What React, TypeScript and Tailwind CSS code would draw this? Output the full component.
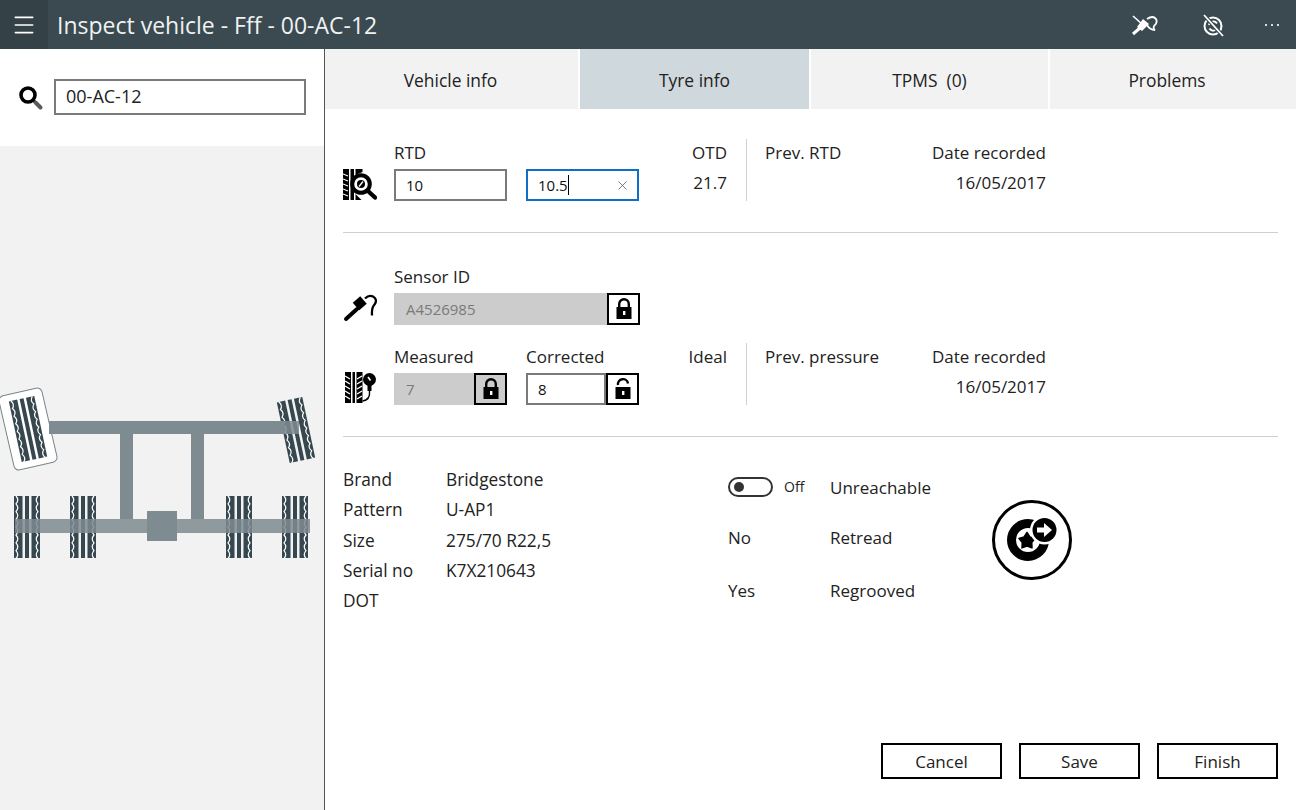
import React from 'react';
import { Menu, X } from 'lucide-react';

const Tyre = ({ x, y, rotate = 0 }: { x: number; y: number; rotate?: number }) => {
  const wave = (cx: number, dir: number) => {
    let d = `M${cx} -31`;
    for (let i = 0; i < 8; i++) d += ` q${dir * 3.5} 3.9 0 7.8`;
    return d;
  };
  return (
    <g transform={`translate(${x} ${y}) rotate(${rotate})`}>
      <g fill="#37474f">
        <rect x="-13" y="-31" width="8.5" height="62" />
        <rect x="-2" y="-31" width="4" height="62" />
        <rect x="4.5" y="-31" width="8.5" height="62" />
      </g>
      <path d={wave(-11, 1)} fill="none" stroke="#fff" strokeWidth="1.2" />
      <path d={wave(11, -1)} fill="none" stroke="#fff" strokeWidth="1.2" />
    </g>
  );
};

const AxleDiagram = () => (
  <svg width="324" height="190" viewBox="0 380 324 190" className="block">
    <g transform="rotate(-13 28 429)">
      <rect x="6" y="391" width="44" height="76" rx="5" fill="#fff" stroke="#78868c" strokeWidth="1" />
    </g>
    <Tyre x={28} y={429} rotate={-12} />
    <Tyre x={296} y={430} rotate={-12} />
    <Tyre x={27} y={527} />
    <Tyre x={83} y={527} />
    <Tyre x={239} y={527} />
    <Tyre x={295} y={527} />
    <g fill="#7e8b91" fillOpacity="0.85">
      <rect x="285" y="421" width="14" height="13" />
      <rect x="15" y="519" width="295" height="14" />
    </g>
    <g fill="#7e8b91">
      <rect x="49" y="421" width="236" height="13" />
      <rect x="120" y="434" width="13" height="85" />
      <rect x="191" y="434" width="13" height="85" />
      <rect x="147" y="511" width="30" height="30" />
    </g>
  </svg>
);

const SearchGlyph = () => (
  <svg width="26" height="26" viewBox="0 0 26 26">
    <circle cx="10" cy="10" r="7" fill="none" stroke="#000" strokeWidth="3.6" />
    <path d="M15 15l2.5 2.5" stroke="#000" strokeWidth="3" />
    <path d="M17.5 17.5l5 5" stroke="#5a5a5a" strokeWidth="4" strokeLinecap="round" />
  </svg>
);

const SensorIcon = () => (
  <svg width="34" height="34" viewBox="0 0 34 34">
    <path d="M3 28l11-10" stroke="#000" strokeWidth="4" strokeLinecap="round" />
    <path d="M13 15.5l7.5-6.5" stroke="#000" strokeWidth="10" />
    <path d="M22 7.5q4-4 8-2 5 3 1.5 8-3 3-2.5 11" fill="none" stroke="#000" strokeWidth="2.3" />
  </svg>
);

const RtdIcon = () => (
  <svg width="34" height="34" viewBox="0 0 34 34">
    <rect x="0" y="1" width="6" height="31" fill="#000" />
    <path d="M0 6l5 2M0 11l5 2M0 16l5 2M0 21l5 2M0 26l5 2" stroke="#fff" strokeWidth="1.1" />
    <rect x="7.5" y="1" width="3.5" height="31" fill="#000" />
    <path d="M12.5 1h7v3l-7 3zM12.5 32v-6l6 6z" fill="#000" />
    <circle cx="18" cy="16" r="8.8" fill="#fff" stroke="#000" strokeWidth="4" />
    <circle cx="18" cy="16" r="4" fill="#000" />
    <path d="M16 18.5l4-5" stroke="#fff" strokeWidth="1.3" />
    <path d="M25 23l7 6.5" stroke="#000" strokeWidth="4.4" strokeLinecap="round" />
  </svg>
);

const PressureIcon = () => (
  <svg width="34" height="34" viewBox="0 0 34 34">
    <g fill="#000">
      <rect x="2" y="1" width="6" height="31" />
      <rect x="9.5" y="1" width="2.5" height="31" />
      <rect x="13.5" y="1" width="6" height="31" />
    </g>
    <path d="M2 5l5 3M2 10l5 3M2 15l5 3M2 20l5 3M2 25l5 3" stroke="#fff" strokeWidth="1.4" />
    <path d="M19 5l-5 3M19 10l-5 3M19 15l-5 3M19 20l-5 3M19 25l-5 3" stroke="#fff" strokeWidth="1.4" />
    <circle cx="26.5" cy="8.5" r="6.5" fill="#000" />
    <path d="M25 6l2.5 3.5" stroke="#fff" strokeWidth="1.6" />
    <path d="M26.5 14v6" stroke="#000" strokeWidth="4" />
    <path d="M26.5 20q1 9-7 10" fill="none" stroke="#000" strokeWidth="1.4" />
  </svg>
);

const LockGlyph = ({ open = false }: { open?: boolean }) => (
  <svg width="20" height="24" viewBox="0 0 20 24">
    <rect x="2.5" y="10" width="15" height="12" fill="#000" />
    <rect x="9" y="14" width="2.4" height="4" fill="#fff" />
    {open ? (
      <path d="M5 8a5 5 0 0 1 10-1.5" fill="none" stroke="#000" strokeWidth="2.4" />
    ) : (
      <path d="M5.2 10V7a4.8 4.8 0 0 1 9.6 0v3" fill="none" stroke="#000" strokeWidth="2.4" />
    )}
  </svg>
);

const LockButton = ({ open, filled }: { open?: boolean; filled?: boolean }) => (
  <div className={`w-[33px] h-[32px] border-2 border-black flex items-center justify-center shrink-0 ${filled ? 'bg-[#cccccc]' : 'bg-white'}`}>
    <LockGlyph open={open} />
  </div>
);

const starPoints = [0, 1, 2, 3, 4]
  .flatMap((i) => {
    const a = ((i * 72 - 90) * Math.PI) / 180;
    const b = ((i * 72 - 54) * Math.PI) / 180;
    return [`${35 + 8.5 * Math.cos(a)},${41 + 8.5 * Math.sin(a)}`, `${35 + 5 * Math.cos(b)},${41 + 5 * Math.sin(b)}`];
  })
  .join(' ');

const WheelButton = () => (
  <div className="w-[80px] h-[80px] rounded-full border-[3px] border-black bg-white">
    <svg width="74" height="74" viewBox="3 3 74 74" className="block">
      <circle cx="36" cy="40" r="16.5" fill="none" stroke="#000" strokeWidth="9" />
      <polygon points={starPoints} fill="#000" stroke="#000" strokeWidth="1.5" strokeLinejoin="round" />
      <circle cx="52.5" cy="30" r="14.5" fill="#fff" />
      <circle cx="52.5" cy="30" r="12" fill="#000" />
      <path d="M45 27.5h7V23l8 7-8 7v-4.5h-7z" fill="#fff" />
    </svg>
  </div>
);

const Tab = ({ label, active, className }: { label: string; active?: boolean; className: string }) => (
  <div className={`h-[60px] pt-[2px] flex items-center justify-center text-[17.4px] text-[#222] whitespace-pre ${active ? 'bg-[#cfd8dc]' : 'bg-[#f2f2f2]'} ${className}`}>
    {label}
  </div>
);

const Field = ({ value, active, disabled, className = 'w-[113px]' }: { value: string; active?: boolean; disabled?: boolean; className?: string }) => (
  <div
    className={`h-[32px] flex items-center text-[15px] ${className} ${
      disabled
        ? 'bg-[#cccccc] text-[#7a7a7a] pl-[12px]'
        : active
          ? 'border-2 border-[#0f6fc6] bg-white text-[#111] pl-[10px]'
          : 'border-2 border-[#7a7a7a] bg-white text-[#111] pl-[10px]'
    }`}
  >
    {value}
    {active && (
      <>
        <span className="w-px h-[20px] bg-black" />
        <X className="ml-auto mr-[7px] w-[15px] h-[15px] text-[#555]" strokeWidth={1.25} />
      </>
    )}
  </div>
);

const Readings = ({ right, prev }: { right: React.ReactNode; prev: string }) => (
  <>
    <div className="w-[89px] h-[62px] text-right pr-px">{right}</div>
    <div className="w-px h-[62px] bg-[#d0d0d0] ml-[18px]" />
    <div className="w-[299px] pl-[18px] flex justify-between">
      <span className="leading-[27px]">{prev}</span>
      <div className="text-right">
        <div className="leading-[27px]">Date recorded</div>
        <div className="leading-[33px]">16/05/2017</div>
      </div>
    </div>
  </>
);

const details = [
  ['Brand', 'Bridgestone'],
  ['Pattern', 'U-AP1'],
  ['Size', '275/70 R22,5'],
  ['Serial no', 'K7X210643'],
  ['DOT', ''],
];

export default function App() {
  return (
    <div className="w-[1296px] h-[810px] flex flex-col overflow-hidden bg-white text-[17px] text-[#222]" style={{ fontFamily: '"Open Sans", "Noto Sans", sans-serif' }}>
      {/* title bar */}
      <header className="h-[49px] shrink-0 flex items-center bg-[#3b4a50] text-white">
        <div className="w-[48px] h-full bg-[#344146] flex items-center justify-center">
          <Menu className="w-[26px] h-[26px]" strokeWidth={1.5} />
        </div>
        <h1 className="ml-[9px] pt-[2px] text-[23px] font-normal text-[#eef2f3]">Inspect vehicle - Fff - 00-AC-12</h1>
        <div className="ml-auto flex items-center">
          <svg width="28" height="24" viewBox="0 0 28 24" className="mr-[42px]">
            <path d="M2 3l10 9" stroke="#fff" strokeWidth="1.6" />
            <path d="M2 21l7-6" stroke="#fff" strokeWidth="3" />
            <path d="M6 14l6-8 6 5-7 7z" fill="#fff" />
            <path d="M16 6q6-4 9 0 2 4-2 7-1 3 1 4-5 0-8-5" fill="none" stroke="#fff" strokeWidth="1.8" />
          </svg>
          <svg width="24" height="24" viewBox="0 0 24 24" fill="none" stroke="#fff" className="mr-[40px]">
            <circle cx="12" cy="13" r="8.5" strokeWidth="2" />
            <path d="M8 12a4.5 4.5 0 0 1 8 -1.5M8.5 15.5a4.5 4.5 0 0 0 6 1.5" strokeWidth="2" />
            <path d="M3 2l19 21" stroke="#3b4a50" strokeWidth="4" />
            <path d="M3 2l19 21" strokeWidth="1.8" />
          </svg>
          <div className="flex gap-[4px] mr-[17px]">
            <span className="w-[2px] h-[2px] bg-[#d8dee0]" />
            <span className="w-[2px] h-[2px] bg-[#d8dee0]" />
            <span className="w-[2px] h-[2px] bg-[#d8dee0]" />
          </div>
        </div>
      </header>

      <div className="flex-1 flex min-h-0">
        {/* left panel */}
        <aside className="w-[325px] shrink-0 border-r border-[#555] flex flex-col">
          <div className="h-[97px] shrink-0 flex items-center pl-[18px]">
            <SearchGlyph />
            <div className="ml-[10px] mb-[2px] w-[252px] h-[36px] border-2 border-[#7a7a7a] flex items-center pl-[10px] text-[18px]">00-AC-12</div>
          </div>
          <div className="flex-1 bg-[#f2f2f2] pt-[234px]">
            <AxleDiagram />
          </div>
        </aside>

        {/* main */}
        <main className="flex-1 flex flex-col min-w-0">
          <nav className="flex shrink-0 gap-[2px]">
            <Tab label="Vehicle info" className="w-[253px] pr-[2px]" />
            <Tab label="Tyre info" active className="w-[229px]" />
            <Tab label="TPMS  (0)" className="w-[237px]" />
            <Tab label="Problems" className="flex-1 pr-[12px]" />
          </nav>

          <div className="flex-1 flex flex-col px-[18px] pb-[31px]">
            <section className="h-[124px] shrink-0 border-b border-[#d0d0d0] pt-[30px] flex items-start">
              <div className="w-[51px] pt-[29px]"><RtdIcon /></div>
              <div className="w-[113px]">
                <div className="leading-[27px] mb-[3px]">RTD</div>
                <Field value="10" />
              </div>
              <div className="w-[113px] ml-[19px] pt-[30px]">
                <Field value="10.5" active />
              </div>
              <Readings
                prev="Prev. RTD"
                right={
                  <>
                    <div className="leading-[27px]">OTD</div>
                    <div className="leading-[33px]">21.7</div>
                  </>
                }
              />
            </section>

            <section className="h-[204px] shrink-0 border-b border-[#d0d0d0] pt-[30px]">
              <div className="flex items-start">
                <div className="w-[51px] pt-[28px]"><SensorIcon /></div>
                <div>
                  <div className="leading-[27px] mb-[3px]">Sensor ID</div>
                  <div className="flex">
                    <Field value="A4526985" disabled className="w-[213px]" />
                    <LockButton />
                  </div>
                </div>
              </div>
              <div className="flex items-start mt-[18px]">
                <div className="w-[51px] pt-[28px]"><PressureIcon /></div>
                <div className="w-[113px]">
                  <div className="leading-[27px] mb-[3px]">Measured</div>
                  <div className="flex">
                    <Field value="7" disabled className="w-[80px]" />
                    <LockButton filled />
                  </div>
                </div>
                <div className="w-[113px] ml-[19px]">
                  <div className="leading-[27px] mb-[3px]">Corrected</div>
                  <div className="flex">
                    <Field value="8" className="w-[80px]" />
                    <LockButton open />
                  </div>
                </div>
                <Readings prev="Prev. pressure" right={<div className="leading-[27px]">Ideal</div>} />
              </div>
            </section>

            <section className="flex pt-[28px]">
              <dl className="w-[385px] leading-[30.3px] text-[17.3px]">
                {details.map(([k, v]) => (
                  <div key={k} className="flex">
                    <dt className="w-[103px]">{k}</dt>
                    <dd>{v}</dd>
                  </div>
                ))}
              </dl>
              <div className="w-[264px] pt-[9px]">
                <div className="flex items-center h-[27px]">
                  <div className="w-[102px] mb-[2px] flex items-center">
                    <div className="w-[45px] h-[20px] rounded-full border-2 border-[#333] flex items-center pl-[4px]">
                      <span className="w-[10px] h-[10px] rounded-full bg-[#333]" />
                    </div>
                    <span className="ml-[11px] text-[14px]">Off</span>
                  </div>
                  <span>Unreachable</span>
                </div>
                <div className="flex items-center h-[27px] mt-[23px]">
                  <span className="w-[102px]">No</span>
                  <span>Retread</span>
                </div>
                <div className="flex items-center h-[27px] mt-[26px]">
                  <span className="w-[102px]">Yes</span>
                  <span>Regrooved</span>
                </div>
              </div>
              <div className="pt-[35px]"><WheelButton /></div>
            </section>

            <div className="mt-auto flex justify-end gap-[17px]">
              {['Cancel', 'Save', 'Finish'].map((b) => (
                <button key={b} className="w-[121px] h-[36px] pt-[1px] border-2 border-black flex items-center justify-center">{b}</button>
              ))}
            </div>
          </div>
        </main>
      </div>
    </div>
  );
}
